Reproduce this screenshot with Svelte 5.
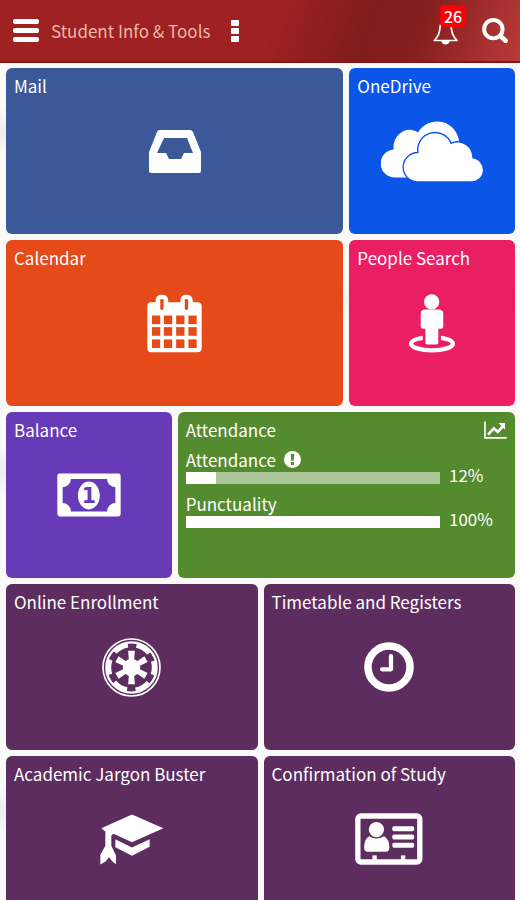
<script lang="ts">
	type Icon = 'mail' | 'cloud' | 'calendar' | 'person' | 'money' | 'emblem' | 'clock' | 'cap' | 'card';

	interface Tile {
		title: string;
		icon?: Icon;
		span: 'narrow' | 'half' | 'wide';
		color: string;
	}

	const notifications = 26;

	const tiles: Tile[] = [
		{ title: 'Mail', icon: 'mail', span: 'wide', color: 'navy' },
		{ title: 'OneDrive', icon: 'cloud', span: 'narrow', color: 'blue' },
		{ title: 'Calendar', icon: 'calendar', span: 'wide', color: 'orange' },
		{ title: 'People Search', icon: 'person', span: 'narrow', color: 'pink' },
		{ title: 'Balance', icon: 'money', span: 'narrow', color: 'violet' },
		{ title: 'Attendance', span: 'wide', color: 'green' },
		{ title: 'Online Enrollment', icon: 'emblem', span: 'half', color: 'plum' },
		{ title: 'Timetable and Registers', icon: 'clock', span: 'half', color: 'plum' },
		{ title: 'Academic Jargon Buster', icon: 'cap', span: 'half', color: 'plum' },
		{ title: 'Confirmation of Study', icon: 'card', span: 'half', color: 'plum' },
	];

	const meters = [
		{ id: 'attendance', label: 'Attendance', value: 12, warning: true },
		{ id: 'punctuality', label: 'Punctuality', value: 100, warning: false },
	];

	const spokes = [0, 60, 120, 180, 240, 300];
</script>

{#snippet glyph(icon: Icon)}
	{#if icon === 'mail'}
		<svg viewBox="0 0 52 43" width="52" height="43" aria-hidden="true">
			<path
				fill="#fff"
				fill-rule="evenodd"
				d="M10 0H41Q43 0 44 2L52 22V41Q52 43 50 43H2Q0 43 0 41V22L8 2Q9 0 10 0ZM15 8L8 23H17L20 29H32L35 23H44L38 8Z"
			/>
		</svg>
	{:else if icon === 'cloud'}
		<svg viewBox="34 34 306 182" width="102" height="61" aria-hidden="true">
			<path
				fill="#fff"
				d="M78 203A42 42 0 0 1 72 119C66 76 112 44 145 68A66 66 0 0 1 268 97L240 105L150 203Z"
			/>
			<path
				fill="#fff"
				stroke="#0b55e8"
				stroke-width="8"
				paint-order="stroke"
				d="M142 214A42 42 0 0 1 147 130A50 50 0 0 1 243 103A45 45 0 0 1 308 146A34 34 0 0 1 303 214Z"
			/>
		</svg>
	{:else if icon === 'calendar'}
		<svg viewBox="52 26 166 176" width="55" height="59" aria-hidden="true">
			<path
				fill="#fff"
				d="M64 50H78V44Q78 27 97 27T116 44V50H153V44Q153 27 171 27T190 44V50H205Q217 50 217 62V189Q217 201 205 201H65Q53 201 53 189V62Q53 50 64 50Z"
			/>
			<g fill="#e64a19">
				<rect x="92" y="40" width="10" height="33" rx="4" />
				<rect x="166" y="40" width="10" height="33" rx="4" />
				{#each [90, 125, 162] as y}
					{#each [67, 103, 140, 177] as x}
						<rect {x} {y} width="25" height="26" />
					{/each}
				{/each}
			</g>
		</svg>
	{:else if icon === 'person'}
		<svg viewBox="50 26 144 178" width="48" height="59" aria-hidden="true">
			<ellipse cx="122" cy="176" rx="63" ry="20" fill="none" stroke="#fff" stroke-width="13" />
			<path fill="#e91e63" d="M94 140H149V179H94Z" />
			<circle cx="121" cy="50" r="23" fill="#fff" />
			<path
				fill="#fff"
				d="M98 73H145Q156 75 156 86V124Q156 131 149 131H141V172Q141 178 135 178H108Q102 178 102 172V131H95Q88 131 88 124V86Q88 75 98 73Z"
			/>
		</svg>
	{:else if icon === 'money'}
		<svg viewBox="170 218 193 131" width="64" height="44" aria-hidden="true">
			<rect x="171" y="219" width="191" height="129" rx="7" fill="#fff" />
			<path
				fill="#673ab7"
				d="M212 235H321A25 25 0 0 0 346 260V308A25 25 0 0 0 321 333H212A25 25 0 0 0 187 308V260A25 25 0 0 0 212 235Z"
			/>
			<ellipse cx="266" cy="285" rx="33" ry="42" fill="#fff" />
			<text x="266" y="308" class="note-value">1</text>
		</svg>
	{:else if icon === 'emblem'}
		<svg viewBox="-88 -88 176 176" width="59" height="59" aria-hidden="true">
			<g fill="none" stroke="#fff">
				<circle r="85" stroke-width="5" />
				<circle r="75" stroke-width="7" />
				<circle r="67" stroke-width="13" stroke-dasharray="44 26.16" stroke-dashoffset="22" />
			</g>
			<g fill="#fff">
				<circle r="26" />
				{#each spokes as angle}
					<path d="M-6 0L-10 -50H10L6 0Z" transform="rotate({angle})" />
				{/each}
			</g>
		</svg>
	{:else if icon === 'clock'}
		<svg viewBox="0 0 152 152" width="50" height="50" aria-hidden="true">
			<circle cx="76" cy="76" r="64" fill="none" stroke="#fff" stroke-width="23" />
			<path
				d="M82 43V83H55"
				fill="none"
				stroke="#fff"
				stroke-width="13"
				stroke-linecap="round"
				stroke-linejoin="round"
			/>
		</svg>
	{:else if icon === 'cap'}
		<svg viewBox="30 196 204 152" width="68" height="51" aria-hidden="true">
			<g fill="#fff">
				<path d="M40 238L132 197L226 238L132 280L80 256Q70 254 70 264V291L84 320V346L73 338L63 325L53 338L37 347V318L52 291V248Z" />
				<path d="M82 271L132 296L185 271V294L132 321L82 295Z" />
			</g>
		</svg>
	{:else}
		<svg viewBox="46 186 204 157" width="68" height="52" aria-hidden="true">
			<rect x="54" y="195" width="187" height="139" rx="9" fill="none" stroke="#fff" stroke-width="16" />
			<g fill="#fff">
				<circle cx="110" cy="236" r="23" />
				<path d="M88 256Q110 270 133 256Q149 265 149 290Q149 303 138 303H84Q73 303 73 290Q73 265 88 256Z" />
				<rect x="158" y="226" width="66" height="15" rx="5" />
				<rect x="158" y="251" width="66" height="15" rx="5" />
				<rect x="158" y="276" width="66" height="15" rx="5" />
				<rect x="98" y="314" width="13" height="16" />
				<rect x="184" y="314" width="13" height="16" />
			</g>
		</svg>
	{/if}
{/snippet}

<header class="bar">
	<button type="button" class="icon-button" aria-label="Menu">
		<svg viewBox="0 0 26 23" width="26" height="23" fill="#fff" aria-hidden="true">
			<rect width="26" height="5" rx="2" />
			<rect y="9" width="26" height="5" rx="2" />
			<rect y="18" width="26" height="5" rx="2" />
		</svg>
	</button>
	<h1>Student Info &amp; Tools</h1>
	<button type="button" class="icon-button more" aria-label="More options">
		<svg viewBox="0 0 8 22" width="8" height="22" fill="#fff" aria-hidden="true">
			<rect width="8" height="6" rx="1" />
			<rect y="8" width="8" height="6" rx="1" />
			<rect y="16" width="8" height="6" rx="1" />
		</svg>
	</button>
	<div class="actions">
		<button type="button" class="icon-button bell" aria-label="Notifications">
			<svg viewBox="518 50 76 84" width="25" height="28" aria-hidden="true">
				<path
					d="M556 56C544 60 540 70 539 84C538 104 529 114 522 121H591C584 114 575 104 574 84C573 70 568 60 556 56Z"
					fill="none"
					stroke="#fff"
					stroke-width="5"
					stroke-linejoin="round"
				/>
				<path d="M543 122H569Q567 133 556 133T543 122Z" fill="#fff" />
			</svg>
			<span class="badge">{notifications}</span>
		</button>
		<button type="button" class="icon-button" aria-label="Search">
			<svg viewBox="667 58 78 76" width="26" height="25" fill="none" stroke="#fff" aria-hidden="true">
				<circle cx="701" cy="92" r="28" stroke-width="12" />
				<path d="M722 112L738 127" stroke-width="14" stroke-linecap="round" />
			</svg>
		</button>
	</div>
</header>

<main class="tiles">
	{#each tiles as tile}
		{#if tile.icon}
			<a href="#{tile.icon}" class="tile {tile.span} {tile.color}">
				<h2>{tile.title}</h2>
				<span class="glyph">{@render glyph(tile.icon)}</span>
			</a>
		{:else}
			<section class="tile {tile.span} {tile.color}">
				<div class="tile-head">
					<h2>{tile.title}</h2>
					<button type="button" class="icon-button" aria-label="Show chart">
						<svg viewBox="946 62 70 54" width="23" height="18" fill="none" stroke="#fff" aria-hidden="true">
							<path d="M949 63V113H1015" stroke-width="5" />
							<path d="M958 103L976 84L988 95L1004 77" stroke-width="8" />
							<path d="M990 68H1010V88Z" fill="#fff" stroke="none" />
						</svg>
					</button>
				</div>
				<div class="meters">
					{#each meters as meter}
						<div class="meter">
							<label for={meter.id}>
								{meter.label}
								{#if meter.warning}
									<svg viewBox="0 0 17 17" width="17" height="17" aria-hidden="true">
										<circle cx="8.5" cy="8.5" r="8.5" fill="#fff" />
										<path d="M6.7 3H10.3L9.7 9.7H7.3Z" fill="#558b2f" />
										<rect x="7" y="11" width="3" height="3" fill="#558b2f" />
									</svg>
								{/if}
							</label>
							<progress id={meter.id} max="100" value={meter.value}></progress>
							<span class="percent">{meter.value}%</span>
						</div>
					{/each}
				</div>
			</section>
		{/if}
	{/each}
</main>

<style>
	:global(body) {
		background:
			radial-gradient(circle at 0 130px, #ececee 0, transparent 24px),
			radial-gradient(circle at 100% 300px, #ececee 0, transparent 24px),
			#fbfafb;
		background-size: 180px 340px;
		font-family: 'Noto Sans CJK SC', 'Noto Sans', sans-serif;
	}

	h1,
	h2 {
		margin: 0;
		font-size: 17px;
		font-weight: 400;
		line-height: 24px;
	}

	.bar {
		display: flex;
		align-items: center;
		box-sizing: border-box;
		height: 63px;
		padding: 0 12px 0 13px;
		border-bottom: 2px solid #8c1414;
		background: linear-gradient(110deg, #9f2121 0%, #9f2121 52%, #7f1c1c 70%, #861f1f 80%, #b93a3a 100%);
	}

	.bar h1 {
		margin-left: 12px;
		color: #eab9ae;
		white-space: nowrap;
	}

	.icon-button {
		display: flex;
		padding: 0;
		border: none;
		background: none;
		cursor: pointer;
	}

	.more {
		margin-left: 21px;
	}

	.actions {
		display: flex;
		align-items: center;
		gap: 24px;
		margin-left: auto;
	}

	.bell {
		position: relative;
	}

	.badge {
		position: absolute;
		top: -12px;
		left: 7px;
		padding: 0 4px;
		border-radius: 4px;
		background: #fb0007;
		color: #fff;
		font-family: 'Noto Sans CJK SC', 'Noto Sans', sans-serif;
		font-size: 16px;
		font-weight: 500;
		line-height: 22px;
	}

	.tiles {
		display: grid;
		grid-template-columns: repeat(6, 1fr);
		grid-auto-rows: 166px;
		gap: 6px;
		padding: 5px 5px 6px 6px;
	}

	.tile {
		display: flex;
		flex-direction: column;
		box-sizing: border-box;
		min-width: 0;
		padding: 6px 8px 30px;
		border-radius: 6px;
		color: #fff;
		text-decoration: none;
	}

	.narrow {
		grid-column: span 2;
	}

	.half {
		grid-column: span 3;
	}

	.wide {
		grid-column: span 4;
	}

	.navy {
		background: #3b5998;
	}

	.blue {
		background: #0b55e8;
	}

	.orange {
		background: #e64a19;
	}

	.pink {
		background: #e91e63;
	}

	.violet {
		background: #673ab7;
	}

	.green {
		background: #558b2f;
	}

	.plum {
		background: #5c2d5e;
	}

	.glyph {
		display: flex;
		flex: 1;
		align-items: center;
		justify-content: center;
	}

	.note-value {
		fill: #673ab7;
		font-family: 'DejaVu Sans', sans-serif;
		font-size: 62px;
		font-weight: 700;
		text-anchor: middle;
	}

	.tile-head {
		display: flex;
		align-items: center;
		justify-content: space-between;
	}

	.meters {
		display: flex;
		flex-direction: column;
		gap: 7px;
		padding-top: 5px;
	}

	.meter {
		display: grid;
		grid-template-columns: 1fr 58px;
		grid-template-rows: 25px 12px;
		column-gap: 9px;
	}

	.meter label {
		display: flex;
		align-items: center;
		gap: 8px;
		font-size: 17px;
		line-height: 24px;
	}

	progress {
		grid-row: 2;
		width: 100%;
		height: 12px;
		border: none;
		background: #abc698;
		appearance: none;
	}

	progress::-webkit-progress-bar {
		background: #abc698;
	}

	progress::-webkit-progress-value {
		background: #fff;
	}

	.percent {
		grid-row: 1 / 3;
		grid-column: 2;
		align-self: end;
		font-size: 17px;
		line-height: 18px;
	}
</style>
